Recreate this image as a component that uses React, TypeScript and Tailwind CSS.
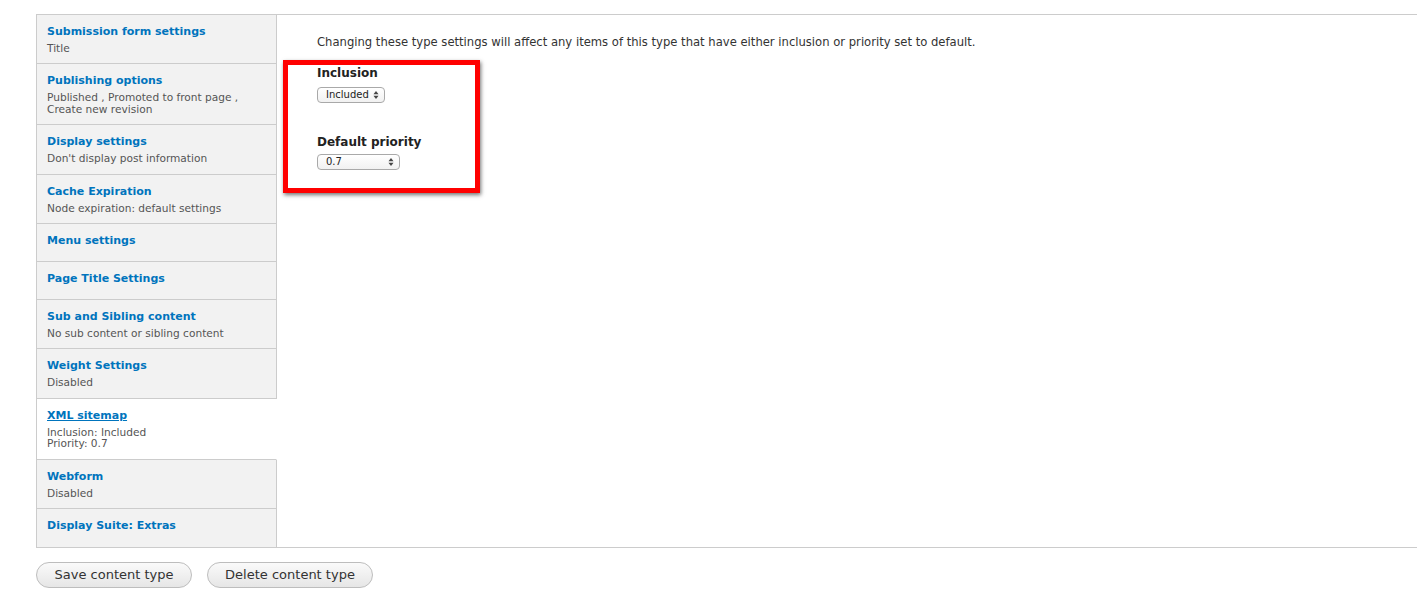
const tabs = [
  { title: "Submission form settings", desc: ["Title"] },
  { title: "Publishing options", desc: ["Published , Promoted to front page ,", "Create new revision"] },
  { title: "Display settings", desc: ["Don't display post information"] },
  { title: "Cache Expiration", desc: ["Node expiration: default settings"] },
  { title: "Menu settings", desc: [] },
  { title: "Page Title Settings", desc: [] },
  { title: "Sub and Sibling content", desc: ["No sub content or sibling content"] },
  { title: "Weight Settings", desc: ["Disabled"] },
  { title: "XML sitemap", desc: ["Inclusion: Included", "Priority: 0.7"], active: true },
  { title: "Webform", desc: ["Disabled"] },
  { title: "Display Suite: Extras", desc: [], last: true },
];

const font = { fontFamily: '"DejaVu Sans", Verdana, sans-serif' };

const Arrows = () => (
  <svg className="pointer-events-none absolute right-[6px] top-1/2 -translate-y-1/2" width="6" height="9" viewBox="0 0 6 9">
    <path d="M3 0.5L5.5 3.8H0.5Z" fill="#444" />
    <path d="M3 8.5L5.5 5.2H0.5Z" fill="#444" />
  </svg>
);

const MiniSelect = ({ value, width }: { value: string; width: string }) => (
  <div className={`relative h-[16px] ${width}`}>
    <select
      defaultValue={value}
      className="block h-full w-full appearance-none rounded-[4px] border border-[#a9a9a9] bg-gradient-to-b from-white to-[#f1f1f1] pl-[8px] text-[10px] leading-[14px] text-[#222] outline-none"
      style={font}
    >
      <option>{value}</option>
    </select>
    <Arrows />
  </div>
);

export default function App() {
  return (
    <div className="min-h-screen bg-white pt-[14px] text-[#333]" style={font}>
      <div className="ml-[36px] flex border-t border-b border-l border-[#cccccc]">
        {/* vertical tabs */}
        <ul className="w-[240px] shrink-0">
          {tabs.map((t) => (
            <li
              key={t.title}
              className={`pl-[10px] pr-[8px] pt-[8px] ${t.last ? "pb-[12px]" : t.desc.length ? "pb-[9px]" : "pb-[11px]"} ${
                t.last ? "" : "border-b border-[#cccccc]"
              } ${t.active ? "border-r border-r-white bg-white" : "border-r border-[#cccccc] bg-[#f2f2f2]"}`}
            >
              <a
                href="#"
                className={`block text-[11px] font-bold leading-[18px] text-[#0074bd] ${t.active ? "underline" : ""}`}
              >
                {t.title}
              </a>
              {t.desc.length > 0 && (
                <div className="mt-[2px] text-[10.6px] leading-[11.4px] text-[#555]">
                  {t.desc.map((d) => (
                    <div key={d}>{d}</div>
                  ))}
                </div>
              )}
            </li>
          ))}
        </ul>

        {/* tab pane */}
        <div className="flex-1 pl-[40px] pt-[18px]">
          <p className="text-[11.6px] leading-[18px] text-[#333]">
            Changing these type settings will affect any items of this type that have either inclusion or priority set to default.
          </p>
          <div className="-ml-[34px] mt-[9px] w-[197px] border-[5px] border-[#ff0000] pb-[18px] pl-[29px] shadow-[1px_2px_4px_rgba(0,0,0,0.55)]">
            <label className="block text-[12px] font-bold leading-[16px] text-[#222]">Inclusion</label>
            <div className="mt-[6px]">
              <MiniSelect value="Included" width="w-[68px]" />
            </div>
            <label className="mt-[31px] block text-[12px] font-bold leading-[16px] text-[#222]">Default priority</label>
            <div className="mt-[4px]">
              <MiniSelect value="0.7" width="w-[83px]" />
            </div>
          </div>
        </div>
      </div>

      <div className="ml-[36px] mt-[14px] flex gap-[15px]">
        <button className="h-[26px] w-[156px] rounded-full border border-[#bdbdbd] bg-gradient-to-b from-[#fafafa] to-[#e6e6e6] text-[13px] leading-[24px] text-[#333]">
          Save content type
        </button>
        <button className="h-[26px] w-[166px] rounded-full border border-[#bdbdbd] bg-gradient-to-b from-[#fafafa] to-[#e6e6e6] text-[13px] leading-[24px] text-[#333]">
          Delete content type
        </button>
      </div>
    </div>
  );
}
